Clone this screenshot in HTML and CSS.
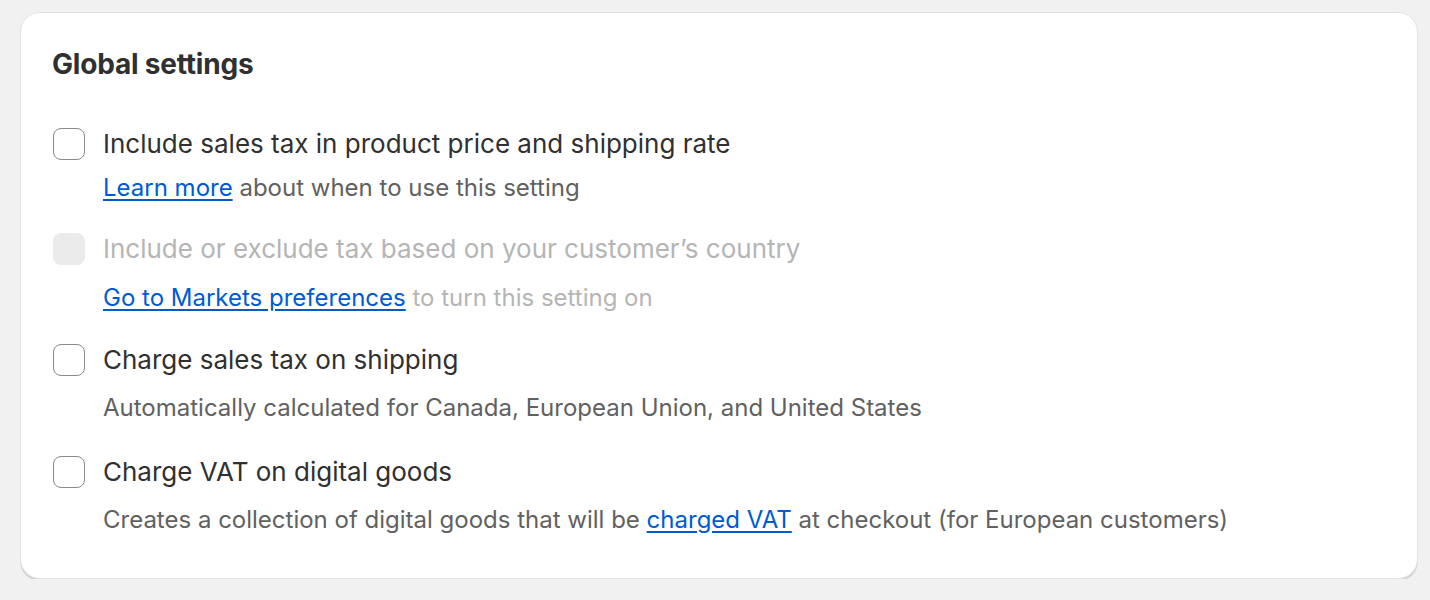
FILE: index.html
```html
<!DOCTYPE html>
<html lang="en">
<head>
    <meta charset="UTF-8">
    <meta name="viewport" content="width=device-width, initial-scale=1.0">
    <title>Global settings</title>
    <link rel="stylesheet" href="styles.css">
</head>
<body>
    <div class="card">
        <h2 class="card-title">Global settings</h2>

        <div class="options">
            <div class="option">
                <label class="option-row">
                    <input type="checkbox" class="checkbox">
                    <span class="option-label">Include sales tax in product price and shipping rate</span>
                </label>
                <p class="help help-tight"><a href="#">Learn more</a> about when to use this setting</p>
            </div>

            <div class="option disabled">
                <label class="option-row">
                    <input type="checkbox" class="checkbox" disabled>
                    <span class="option-label">Include or exclude tax based on your customer’s country</span>
                </label>
                <p class="help"><a href="#">Go to Markets preferences</a> to turn this setting on</p>
            </div>

            <div class="option">
                <label class="option-row">
                    <input type="checkbox" class="checkbox">
                    <span class="option-label">Charge sales tax on shipping</span>
                </label>
                <p class="help">Automatically calculated for Canada, European Union, and United States</p>
            </div>

            <div class="option">
                <label class="option-row">
                    <input type="checkbox" class="checkbox">
                    <span class="option-label">Charge VAT on digital goods</span>
                </label>
                <p class="help">Creates a collection of digital goods that will be <a href="#">charged VAT</a> at checkout (for European customers)</p>
            </div>
        </div>
    </div>
</body>
</html>
```

FILE: styles.css
```css
body {
    margin: 0;
    padding: 12px 12px 0 20px;
    background: #f1f1f1;
    font-family: Inter, "Noto Sans", sans-serif;
    color: #303030;
}

.card {
    background: #fff;
    border-radius: 20px;
    border: 1px solid #e3e3e3;
    box-shadow: 0 2px 0 0 rgba(0,0,0,0.12);
    padding: 31px 32px 32px 31px;
    height: 567px;
    box-sizing: border-box;
}

.card-title {
    margin: 0;
    font-size: 28px;
    font-weight: 650;
    line-height: 40px;
    letter-spacing: -0.2px;
}

.options {
    margin-top: 40px;
    display: flex;
    flex-direction: column;
}

.option + .option {
    margin-top: 24px;
}

.option-row {
    display: flex;
    align-items: center;
    gap: 18px;
    cursor: pointer;
}

.checkbox {
    appearance: none;
    -webkit-appearance: none;
    margin: 0 0 0 1px;
    width: 32px;
    height: 32px;
    border: 1.5px solid #8a8a8a;
    border-radius: 8px;
    background: #fff;
    flex-shrink: 0;
    cursor: pointer;
}

.checkbox:disabled {
    border-color: #ebebeb;
    background: #ebebeb;
    cursor: default;
}

.option-label {
    font-size: 26px;
    line-height: 40px;
}

.help {
    margin: 8px 0 0 51px;
    font-size: 24px;
    line-height: 40px;
    color: #616161;
}

.help-tight {
    margin-top: 4px;
}

.help a {
    color: #005bd3;
    text-decoration: underline;
    text-underline-offset: 3px;
}

.option.disabled {
    margin-top: 21px;
}

.disabled .option-label,
.disabled .help {
    color: #b5b5b5;
}

.disabled .help {
    margin-top: 9px;
}

.disabled + .option {
    margin-top: 22px;
}
```
